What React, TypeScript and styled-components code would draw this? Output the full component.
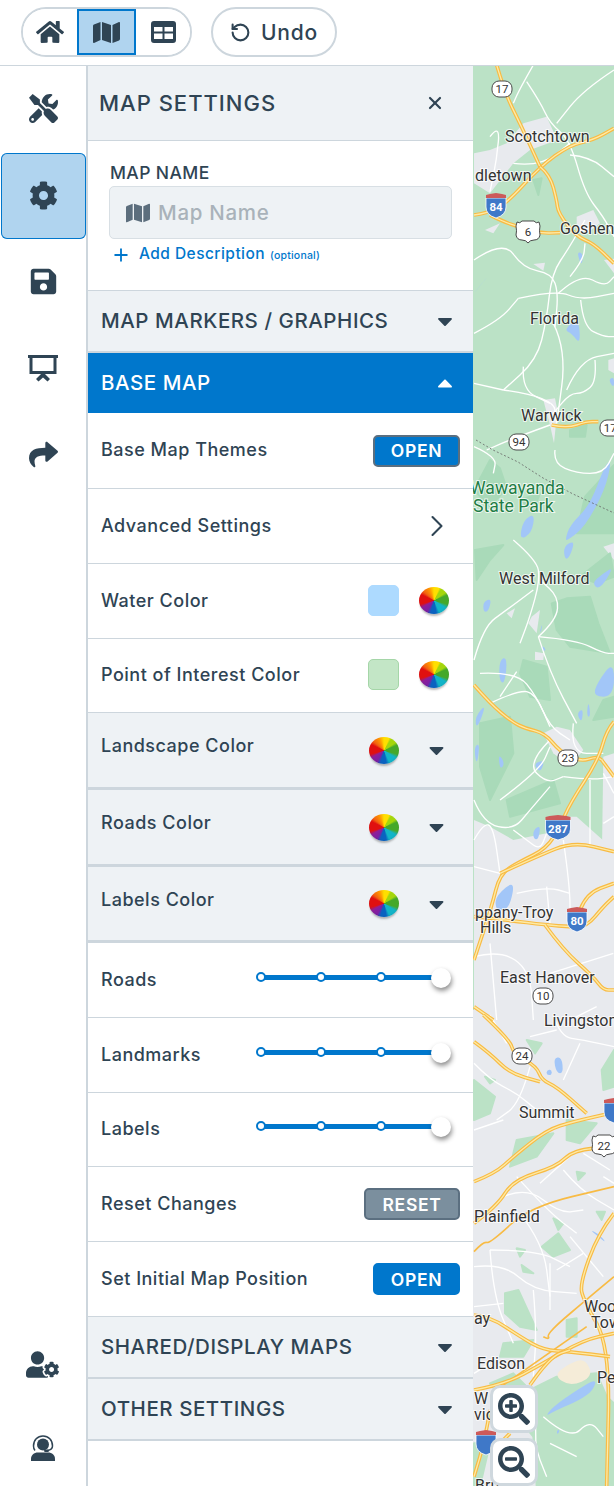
import React from "react";
import styled, { createGlobalStyle } from "styled-components";
import { FaHome, FaMap, FaTools, FaCog, FaSave, FaShare, FaUserCog, FaSearchPlus, FaSearchMinus, FaCaretDown, FaCaretUp } from "react-icons/fa";
import { RotateCcw, Plus, X, ChevronRight } from "lucide-react";

const ink = "#2f4454";
const line = "#cdd6dd";
const blue = "#0077cc";
const soft = "#eef2f5";
const pale = "#b0d4ef";

const Global = createGlobalStyle`
  html, body { margin: 0; padding: 0; background: #fff; }
  * { box-sizing: border-box; }
  body { font-family: Inter, "Open Sans", sans-serif; color: ${ink}; }
`;
const Page = styled.div`
  width: 614px; height: 1486px; overflow: hidden; display: flex; flex-direction: column;
`;
const TopBar = styled.header`
  height: 66px; flex: none; border-bottom: 1px solid ${line}; padding: 7px 0 0 21px; display: flex; gap: 19px; align-items: flex-start;
`;
const Pill = styled.div`
  height: 50px; display: flex; border: 2px solid ${line}; border-radius: 25px; overflow: hidden; background: #fff;
`;
const PillButton = styled.div<{ $w: number; $on?: boolean }>`
  width: ${p => p.$w}px; display: flex; align-items: center; justify-content: center; font-size: 26px;
  background: ${p => (p.$on ? pale : "#fff")};
  box-shadow: ${p => (p.$on ? `inset 0 0 0 2px ${blue}` : "none")};
`;
const UndoPill = styled(Pill)`
  width: 126px; align-items: center; justify-content: center; gap: 10px; font-size: 21px; font-weight: 500; letter-spacing: .85px;
`;
const Body = styled.div`
  flex: 1; display: flex; min-height: 0;
`;
const Rail = styled.nav`
  width: 88px; flex: none; border-right: 2px solid ${line}; display: flex; flex-direction: column; overflow: hidden;
`;
const RailItem = styled.div<{ $on?: boolean }>`
  height: 86.5px; flex: none; display: flex; align-items: center; justify-content: center; font-size: 29px;
  margin-left: 1px; padding: 0 1px 1px 0; border-radius: 6px;
  background: ${p => (p.$on ? pale : "transparent")};
  box-shadow: ${p => (p.$on ? `inset 0 0 0 1px ${blue}` : "none")};
`;
const RailFoot = styled.div`
  margin-top: auto; margin-bottom: -3px;
`;
const FootItem = styled.div`
  height: 83px; display: flex; align-items: center; justify-content: center; padding-right: 1px;
`;
const Panel = styled.section`
  width: 385px; flex: none; display: flex; flex-direction: column;
`;
const TitleBar = styled.div`
  height: 75px; flex: none; background: ${soft}; border-bottom: 1px solid ${line}; display: flex; align-items: center; justify-content: space-between; padding: 0 28px 0 11px;
  h1 { margin: 0; font-size: 22px; font-weight: 500; letter-spacing: 1px; }
`;
const NameBlock = styled.div`
  height: 150px; flex: none; padding: 21px 21px 0 21px; border-bottom: 1px solid ${line};
`;
const NameLabel = styled.div`
  font-size: 17.5px; font-weight: 500; line-height: 21px; letter-spacing: .4px; margin-left: 1px;
`;
const NameInput = styled.div`
  height: 53px; margin-top: 3px; background: ${soft}; border: 1px solid #d8dfe4; border-radius: 5px; padding-left: 16px; display: flex; align-items: center; gap: 8px;
  color: #a9b2ba; font-size: 20.5px; font-weight: 500; letter-spacing: .7px; svg { color: #5c6e7d; font-size: 24px; }
`;
const AddLine = styled.div`
  display: flex; align-items: baseline; margin: 5px 0 0 2px; color: ${blue}; font-size: 15.5px; font-weight: 500; letter-spacing: .45px; line-height: 20px;
  svg { align-self: center; margin-right: 8px; }
  small { font-size: 10.5px; margin-left: 5px; letter-spacing: .2px; }
`;
const Section = styled.div<{ $on?: boolean; $h?: number }>`
  height: ${p => p.$h ?? 62}px; flex: none; padding: 0 16px 1px 13px; display: flex; align-items: center; justify-content: space-between;
  background: ${p => (p.$on ? blue : soft)}; color: ${p => (p.$on ? "#fff" : ink)};
  font-size: 20.5px; font-weight: 500; letter-spacing: .55px;
  border-bottom: ${p => (p.$on ? "none" : `2px solid ${line}`)};
  svg { font-size: 24px; }
`;
const Row = styled.div<{ $h?: number; $gray?: boolean; $right?: number }>`
  height: ${p => p.$h ?? 75}px; flex: none; display: flex; align-items: center; justify-content: space-between;
  padding: 0 0 0 13px;
  padding-right: ${p => p.$right ?? 13}px;
  background: ${p => (p.$gray ? soft : "#fff")};
  border-bottom: ${p => (p.$gray ? `3px solid ${line}` : `1px solid ${line}`)};
`;
const Label = styled.span<{ $lift?: number }>`
  font-size: 18px; font-weight: 500; letter-spacing: .5px; margin-bottom: ${p => p.$lift ?? 2}px;
`;
const Btn = styled.div<{ $kind?: string; $w?: number }>`
  width: ${p => p.$w ?? 87}px; height: 32px; border-radius: 5px; display: flex; align-items: center; justify-content: center;
  color: #fff; font-size: 17.5px; font-weight: 600; letter-spacing: .7px;
  background: ${p => (p.$kind === "reset" ? "#7b8f9e" : blue)};
  border: 2px solid ${p => (p.$kind === "blue" ? blue : "#5b6f80")};
`;
const Tools = styled.div<{ $gap: number; $up?: number }>`
  display: flex; align-items: center; gap: ${p => p.$gap}px; margin-bottom: ${p => p.$up ?? 0}px;
`;
const Swatch = styled.div<{ $c: string; $b?: string }>`
  width: 31px; height: 31px; border-radius: 5px; background: ${p => p.$c}; border: 1px solid ${p => p.$b ?? p.$c};
`;
const Wheel = styled.div`
  width: 30px; height: 27px; border-radius: 50%;
  background:
    radial-gradient(circle at 50% 42%, transparent 62%, rgba(0,0,0,.16) 100%),
    conic-gradient(#ffdf00 0deg, #ffdf00 22deg, #a4d60c 32deg, #a4d60c 55deg, #45a82a 68deg, #45a82a 105deg, #12b4c8 122deg, #12b4c8 155deg, #0a62c0 170deg, #0a62c0 195deg, #7a20a4 212deg, #8f1e98 240deg, #e01010 255deg, #e01010 295deg, #f26010 310deg, #ff9a00 340deg, #ffdf00 360deg);
  box-shadow: 0 3px 2px -1px rgba(60,60,60,.35);
`;
const Caret = styled.span`
  display: flex; width: 15px; justify-content: center; font-size: 24px;
`;
const Slider = styled.div`
  width: 180px; height: 5px; position: relative; background: ${blue}; margin: 0 32px 6px 0; border-radius: 2px;
`;
const Stop = styled.i<{ $at: number }>`
  position: absolute; left: ${p => p.$at}px; top: -3px; width: 10px; height: 10px; margin-left: -5px; border-radius: 50%; background: #fff; border: 2px solid ${blue};
`;
const Thumb = styled.i`
  position: absolute; left: 170px; top: -7px; width: 20px; height: 20px; border-radius: 50%; background: #fff; box-shadow: 1px 3px 5px rgba(0,0,0,.45);
`;
const MapPane = styled.div`
  flex: 1; position: relative; overflow: hidden; background: #bbe2c6;
  svg.map { display: block; }
`;
const ZoomBtn = styled.div<{ $top: number }>`
  position: absolute; left: 17px; top: ${p => p.$top}px; width: 48px; height: 48px; background: #fff; border: 3px solid #cfd8de; border-radius: 10px; display: flex; align-items: center; justify-content: center; font-size: 32px; color: ${ink};
`;

type Tile = { y: number; patch: string; grey?: string[]; dark?: string[]; tan?: string[]; water?: string[]; white?: string[]; gold?: string[] };
const tiles: Tile[] = [
  { y: 60, patch: "#a9dab9",
    grey: ["12,280 60,270 110,250 160,190 230,170 262,240 180,270 130,310 60,400 12,370", "320,470 370,450 390,490 350,520 320,510", "190,612 225,608 220,632", "220,1020 255,1015 262,1050 252,1150 240,1095", "402,600 432,596 432,640", "415,900 432,895 432,940 415,930", "45,510 90,490 70,520"],
    dark: ["60,1200 90,1225 110,1285 60,1340 12,1290", "345,1310 432,1215 432,1420 320,1420", "300,1110 350,1095 345,1130 300,1130", "190,360 215,355 205,405", "150,1320 210,1300 190,1350"],
    water: ["405,1215 425,1200 405,1290 345,1400 295,1440 285,1440 300,1395 360,1335", "282,810 325,770 332,855 305,820", "160,1380 195,1360 185,1420 148,1440", "415,960 432,950 432,985", "320,575 340,580 335,620", "12,700 60,640 20,690"],
    white: ["190,15 150,85 130,130", "170,65 210,125 240,190 300,240 345,400 400,470 432,530", "432,30 340,90 260,190", "60,230 90,190 80,300 60,395", "130,310 210,320 300,250", "300,285 360,290 432,350", "12,600 100,540 160,625 245,640 265,700 255,800", "345,480 300,560 245,640 230,780 200,900 100,990", "145,715 260,690 330,720 432,700", "12,820 90,780 145,715", "265,700 330,640 405,680 432,650", "300,650 340,600 345,550", "250,790 290,870 260,1090", "332,720 340,800 400,830 432,830", "100,990 250,1010 260,1090", "12,970 100,990", "290,990 330,900 432,880", "375,900 380,965 340,1000 300,1000 250,1060", "160,920 155,990 240,1030", "240,1095 130,1135 50,1170", "255,1170 250,1210 320,1240 400,1240 432,1180", "12,1160 80,1190 70,1240"],
    gold: ["80,15 105,100 150,190 210,320", "12,465 50,460 110,430 210,320 300,255 370,240 432,205", "210,320 240,345 260,420 265,460 320,530 370,550 432,610", "60,465 100,485 145,500 210,520 270,518", "245,1095 290,1105 350,1085 385,1085"] },
  { y: 540, patch: "#a9dab9",
    grey: ["220,580 260,560 300,570 340,630 300,680 250,640", "110,220 135,205 125,235", "185,230 210,210 200,280 175,250", "400,650 432,640 432,1000 395,1000", "12,840 60,860 130,900 230,880 300,830 320,830 432,930 432,1440 12,1440", "400,20 432,10 432,60", "195,335 222,340 220,360 195,360"],
    dark: ["15,30 100,15 60,60 20,120", "245,190 290,175 360,170 385,250 420,340 300,320 260,270", "160,360 230,380 240,480 180,470 150,400", "30,550 120,530 130,640 60,780 30,680", "110,780 250,720 270,790 120,830", "330,110 420,40 432,110 380,130", "400,480 432,470 432,530 370,540"],
    water: ["280,20 315,0 300,50 285,60", "40,185 65,175 55,215 40,215", "365,130 400,100 432,80 390,150", "88,360 112,350 105,430 88,425", "380,430 432,360 432,470 370,470", "15,530 50,490 20,570", "12,620 30,610 20,680", "85,640 105,670 90,690", "190,670 225,660 210,700", "320,520 340,505 335,550", "80,1065 135,1020 120,1100 90,1115 75,1100", "190,870 212,855 205,900 190,895", "355,480 362,530 350,530", "215,315 230,330 215,335", "210,270 218,250 212,280"],
    white: ["130,0 200,60 210,120 180,230 150,310", "12,360 40,260 110,210 190,150", "205,290 260,240 265,170 210,120", "205,290 320,300 400,340 432,340", "205,290 240,400 320,550", "30,400 140,395 200,470 240,560", "60,490 145,450 195,460 240,560 300,600", "240,600 170,670 230,730 280,710", "140,395 90,470", "90,780 210,690 240,620", "12,780 40,850 130,870 180,810 240,740", "12,900 40,850 70,860 90,1000", "130,870 170,900 210,930 230,880", "280,900 300,1040 300,1150", "140,1060 230,1040 300,1060", "230,1040 240,1150", "12,1250 90,1230 180,1290 190,1440", "60,1210 80,1440", "240,1300 430,1240", "400,700 432,760", "400,850 432,830", "360,720 360,920", "12,980 90,1000", "380,1400 300,1440", "310,550 300,640 400,640", "280,710 360,720 432,710"],
    gold: ["12,435 60,490 125,545 165,565 225,580 270,635 330,665 380,650 395,660", "432,545 410,570 385,660 300,790 270,860 230,925 150,965 90,1000 65,1100 12,1260", "90,1000 200,950 310,905 432,935", "12,1130 110,1140 230,1155 300,1160 350,1160 400,1100 432,1070", "330,1110 350,1060 432,1030", "225,1155 280,1230 370,1310 400,1350 432,1350", "395,660 432,710", "12,1400 70,1440"] },
  { y: 1010, patch: "#bbe2c6",
    grey: ["0,0 432,0 432,1428 0,1428"],
    dark: ["12,210 75,260 60,310 12,330", "290,330 380,340 330,400 290,390", "140,390 250,370 200,440 120,470", "395,180 432,120 432,230 400,240", "45,200 75,210 60,220", "215,710 265,670 300,720 250,740", "140,715 165,720 150,740", "250,625 280,640 265,660", "105,850 145,840 200,960 150,950 105,910", "155,765 190,790 160,785", "290,930 320,925 320,980 290,980", "380,605 405,605 395,630", "320,485 345,490 325,510", "170,90 215,100 195,130", "100,1000 190,990 160,1040 90,1040", "180,1140 260,1100 380,1090 410,1160 432,1180 432,1428 200,1428 190,1280 60,1120 130,1090", "12,1300 60,1300 30,1428 12,1428"],
    tan: ["250,1095 300,1060 345,1045 370,1100 300,1130"],
    water: ["250,145 275,140 280,190 260,190", "230,180 245,178 245,195 230,195", "380,1105 320,1140 250,1190 225,1220 260,1200 330,1170 370,1140", "260,1260 270,1260 262,1275", "360,660 385,670 410,700 385,680"],
    white: ["12,160 60,210 140,250 200,300", "250,15 270,80 340,90 432,110", "60,15 110,100", "180,80 260,60", "280,210 330,100", "180,170 150,280 80,330", "12,360 100,330", "140,500 230,600 320,670", "100,560 170,530 270,610 340,600", "210,520 310,430", "60,720 200,720 300,770", "60,720 70,860 130,1000", "150,610 220,700 240,860", "12,770 100,760 190,840 320,850", "240,760 240,900", "190,840 200,960 190,1100", "300,680 400,800", "12,890 100,880", "280,480 330,540 432,600", "260,780 340,730", "60,1060 12,1090", "220,1220 300,1290 360,1230 400,1280", "240,1300 320,1340", "200,1220 190,1300 230,1400", "400,500 432,520", "340,430 420,480"],
    gold: ["40,15 120,90 130,130 200,170 215,210 260,230 350,310", "12,95 60,130 120,190 210,215", "12,515 75,490 130,440 230,360 310,335 420,310", "12,640 80,590 130,510 260,470 310,420 432,410", "432,610 385,670 330,820 340,870 420,1010 410,1428", "12,915 60,920 150,980 220,1020 300,1025 420,1040", "12,1140 100,1125 220,1060 340,990 432,970", "180,1125 240,1040 300,1020", "60,1200 45,1290 12,1400", "100,1290 120,1270"] },
];
const thinGold = [
  "12,725 40,695 60,700 180,590 432,530",
  "220,980 240,990 230,970 360,860 432,800",
  "100,1125 250,1020 350,950",
];

const smooth = (s: string, closed = false) => {
  const p = s.split(" ").map(q => q.split(",").map(Number));
  if (closed) {
    const mid = (a: number[], b: number[]) => `${(a[0] + b[0]) / 2} ${(a[1] + b[1]) / 2}`;
    let d = `M${mid(p[p.length - 1], p[0])}`;
    p.forEach((q, i) => { d += `Q${q[0]} ${q[1]} ${mid(q, p[(i + 1) % p.length])}`; });
    return d + "Z";
  }
  let d = `M${p[0][0]} ${p[0][1]}`;
  for (let i = 1; i < p.length - 1; i++) {
    d += `Q${p[i][0]} ${p[i][1]} ${(p[i][0] + p[i + 1][0]) / 2} ${(p[i][1] + p[i + 1][1]) / 2}`;
  }
  return d + `L${p[p.length - 1][0]} ${p[p.length - 1][1]}`;
};

const Gold = ({ pts }: { pts: string }) => (
  <>
    <path d={smooth(pts)} fill="none" stroke="#f8bb44" strokeWidth={11} strokeLinejoin="round" />
    <path d={smooth(pts)} fill="none" stroke="#fdeaa6" strokeWidth={4} strokeLinejoin="round" />
  </>
);

const RouteBadge = ({ x, y, t, w = 20 }: { x: number; y: number; t: string; w?: number }) => (
  <g>
    <rect x={x - w / 2} y={y - 8} width={w} height={16} rx={7} fill="#fff" stroke="#4a4a4a" strokeWidth={1} />
    <text x={x} y={y + 4} textAnchor="middle" fontSize={11.5} fill="#333" fontFamily="Roboto, sans-serif">{t}</text>
  </g>
);
const UsBadge = ({ x, y, t }: { x: number; y: number; t: string }) => (
  <g>
    <path d={`M${x - 11} ${y - 9}q3 2 5 -1h12q2 3 5 1l1 4q-1 5 0 9q-1 5 -6 5q-4 0 -6 3q-2 -3 -6 -3q-5 0 -6 -5q1 -4 0 -9z`} fill="#fff" stroke="#4a4a4a" strokeWidth={1} />
    <text x={x} y={y + 5} textAnchor="middle" fontSize={11.5} fill="#333" fontFamily="Roboto, sans-serif">{t}</text>
  </g>
);
const Interstate = ({ x, y, t, w = 20 }: { x: number; y: number; t: string; w?: number }) => (
  <g>
    <path d={`M${x - w / 2} ${y - 9}h${w}v9q0 8 -${w / 2} 11q-${w / 2} -3 -${w / 2} -11z`} fill="#3f78c8" stroke="#fff" strokeWidth={.8} />
    <path d={`M${x - w / 2} ${y - 9}v-3l4 -1 ${w / 2 - 4} -1 ${w / 2 - 4} 1 4 1v3z`} fill="#cc5a5a" />
    {t ? <text x={x} y={y + 4} textAnchor="middle" fontSize={11.5} fontWeight={700} fill="#fff" fontFamily="Roboto, sans-serif">{t}</text> : null}
  </g>
);
const Place = ({ x, y, t, c = "#333" }: { x: number; y: number; t: string; c?: string }) => (
  <text x={x} y={y} fontSize={c === "#333" ? 16 : 17.6} fill={c} stroke="#fff" strokeOpacity={.75} strokeWidth={2} paintOrder="stroke" fontFamily="Roboto, sans-serif">{t}</text>
);

const layer = (key: "grey" | "dark" | "tan" | "water" | "white" | "gold", fn: (p: string, i: number, t: Tile) => React.ReactNode) =>
  tiles.map(t => (
    <g key={`${key}${t.y}`} transform={`translate(-3 ${t.y - 66}) scale(${1 / 3})`}>
      {(t[key] ?? []).map((p, i) => fn(p, i, t))}
    </g>
  ));

const MapArt = () => (
  <svg className="map" width="141" height="1420" viewBox="0 0 141 1420">
    <rect width="141" height="1420" fill="#bbe2c6" />
    {layer("grey", (p, i) => <polygon key={i} points={p} fill="#e8eaee" />)}
    {layer("dark", (p, i, t) => <polygon key={i} points={p} fill={t.patch} stroke={t.patch} strokeWidth={6} strokeLinejoin="round" />)}
    {layer("tan", (p, i) => <path key={i} d={smooth(p, true)} fill="#f5ecd8" />)}
    {layer("water", (p, i) => <path key={i} d={smooth(p, true)} fill="#a2c6f8" />)}
    {layer("white", (p, i) => <path key={i} d={smooth(p)} fill="none" stroke="#fff" strokeWidth={4} strokeLinejoin="round" />)}
    <g transform={`translate(-3 ${1010 - 66}) scale(${1 / 3})`}>
      {thinGold.map((p, i) => <path key={i} d={smooth(p)} fill="none" stroke="#f8bb44" strokeWidth={5} />)}
    </g>
    <polyline points="3,374 20,384 45,396 70,412 100,428 141,447" fill="none" stroke="#666" strokeWidth={.8} strokeDasharray="2 2" />
    {layer("gold", (p, i) => <Gold key={i} pts={p} />)}
    <RouteBadge x={29} y={23} t="17" />
    <Interstate x={23} y={141} t="84" />
    <UsBadge x={55} y={165} t="6" />
    <RouteBadge x={46} y={376} t="94" />
    <RouteBadge x={141} y={362} t="17A" w={28} />
    <RouteBadge x={95} y={692} t="23" />
    <Interstate x={85} y={763} t="287" w={25} />
    <Interstate x={104} y={855} t="80" />
    <RouteBadge x={70} y={930} t="10" />
    <RouteBadge x={49} y={990} t="24" />
    <Interstate x={141} y={1046} t="" />
    <UsBadge x={131} y={1079} t="22" />
    <Interstate x={13} y={1378} t="" />
    <Place x={32} y={76} t="Scotchtown" />
    <Place x={2} y={115} t="dletown" />
    <Place x={87} y={168} t="Goshen" />
    <Place x={57} y={258} t="Florida" />
    <Place x={48} y={355} t="Warwick" />
    <Place x={-3} y={428} t="Wawayanda" c="#1e7d45" />
    <Place x={0} y={446} t="State Park" c="#1e7d45" />
    <Place x={26} y={518} t="West Milford" />
    <Place x={2} y={852} t="ppany-Troy" />
    <Place x={7} y={867} t="Hills" />
    <Place x={27} y={917} t="East Hanover" />
    <Place x={71} y={960} t="Livingston" />
    <Place x={46} y={1052} t="Summit" />
    <Place x={1} y={1156} t="Plainfield" />
    <Place x={111} y={1246} t="Woo" />
    <Place x={118} y={1262} t="Tow" />
    <Place x={1} y={1258} t="ay" />
    <Place x={4} y={1303} t="Edison" />
    <Place x={124} y={1317} t="Pe" />
    <Place x={1} y={1338} t="W" />
    <Place x={1} y={1354} t="vic" />
    <Place x={2} y={1425} t="Bru" />
  </svg>
);

const TableIcon = () => (
  <svg width="25" height="22" viewBox="0 0 25 22"><path fillRule="evenodd" fill={ink} d="M3 0h19a3 3 0 0 1 3 3v16a3 3 0 0 1-3 3H3a3 3 0 0 1-3-3V3a3 3 0 0 1 3-3zM3 6v4.500h8.500V6zM13.500 6v4.500H22V6zM3 12.500V18h8.500v-5.500zM13.500 12.500V18H22v-5.500z" /></svg>
);
const ScreenIcon = () => (
  <svg width="30" height="27" viewBox="0 0 30 27" fill={ink}>
    <path fillRule="evenodd" d="M0 0h30v3h-1.500V19H1.500V3H0zM4.500 3V16h21V3z" />
    <path d="M15 17l7 7-2.500 2.500-4.500-4-4.500 4L8 24z" />
  </svg>
);
const AgentIcon = () => (
  <svg width="24" height="26" viewBox="0 0 24 26" fill={ink}>
    <circle cx="12" cy="9.500" r="6" />
    <path d="M0 26v-2c0-4 3-6.500 7-6.500h10c4 0 7 2.500 7 6.500v2z" />
    <path d="M2.500 11C2.500 5 6.500 1 12 1s9.500 4 9.500 10c0 2.500-2 4-5 4.500" fill="none" stroke={ink} strokeWidth="1.500" />
    <path d="M4 15.500C2.500 14 2.500 12 2.500 11" fill="none" stroke={ink} strokeWidth="1.500" />
    <rect x="13" y="14.500" width="5" height="2.500" rx="1.200" />
  </svg>
);

const Sl = () => (
  <Slider>
    <Stop $at={0} /><Stop $at={60} /><Stop $at={120} /><Thumb />
  </Slider>
);

export default function App() {
  return (
    <Page>
      <Global />
      <TopBar>
        <Pill>
          <PillButton $w={54}><FaHome size={28} /></PillButton>
          <PillButton $w={59} $on><FaMap size={27} /></PillButton>
          <PillButton $w={54}><TableIcon /></PillButton>
        </Pill>
        <UndoPill><RotateCcw size={21} strokeWidth={2.4} />Undo</UndoPill>
      </TopBar>
      <Body>
        <Rail>
          <RailItem><FaTools /></RailItem>
          <RailItem $on><FaCog /></RailItem>
          <RailItem><FaSave /></RailItem>
          <RailItem><ScreenIcon /></RailItem>
          <RailItem><FaShare /></RailItem>
          <RailFoot>
            <FootItem><FaUserCog size={33} /></FootItem>
            <FootItem><AgentIcon /></FootItem>
          </RailFoot>
        </Rail>
        <Panel>
          <TitleBar><h1>MAP SETTINGS</h1><X size={20} strokeWidth={2.6} /></TitleBar>
          <NameBlock>
            <NameLabel>MAP NAME</NameLabel>
            <NameInput><FaMap />Map Name</NameInput>
            <AddLine><Plus size={20} strokeWidth={2.2} />Add Description<small>(optional)</small></AddLine>
          </NameBlock>
          <Section>MAP MARKERS / GRAPHICS<FaCaretDown /></Section>
          <Section $on $h={60}>BASE MAP<FaCaretUp /></Section>
          <Row $h={76}><Label>Base Map Themes</Label><Btn>OPEN</Btn></Row>
          <Row $right={18}><Label>Advanced Settings</Label><Tools $gap={0}><ChevronRight size={36} strokeWidth={1.4} /></Tools></Row>
          <Row $right={24}><Label>Water Color</Label><Tools $gap={20} $up={2}><Swatch $c="#addaff" /><Wheel /></Tools></Row>
          <Row $h={74} $right={24}><Label>Point of Interest Color</Label><Tools $gap={20} $up={2}><Swatch $c="#c3e6c6" $b="#a5d6a8" /><Wheel /></Tools></Row>
          <Row $gray $h={77} $right={29}><Label $lift={9}>Landscape Color</Label><Tools $gap={30}><Wheel /><Caret><FaCaretDown /></Caret></Tools></Row>
          <Row $gray $h={77} $right={29}><Label $lift={9}>Roads Color</Label><Tools $gap={30}><Wheel /><Caret><FaCaretDown /></Caret></Tools></Row>
          <Row $gray $h={76} $right={29}><Label $lift={9}>Labels Color</Label><Tools $gap={30}><Wheel /><Caret><FaCaretDown /></Caret></Tools></Row>
          <Row $right={0}><Label>Roads</Label><Sl /></Row>
          <Row $right={0}><Label>Landmarks</Label><Sl /></Row>
          <Row $h={74} $right={0}><Label>Labels</Label><Sl /></Row>
          <Row><Label>Reset Changes</Label><Btn $kind="reset" $w={96}>RESET</Btn></Row>
          <Row><Label>Set Initial Map Position</Label><Btn $kind="blue">OPEN</Btn></Row>
          <Section>SHARED/DISPLAY MAPS<FaCaretDown /></Section>
          <Section>OTHER SETTINGS<FaCaretDown /></Section>
        </Panel>
        <MapPane>
          <MapArt />
          <ZoomBtn $top={1319}><FaSearchPlus /></ZoomBtn>
          <ZoomBtn $top={1372}><FaSearchMinus /></ZoomBtn>
        </MapPane>
      </Body>
    </Page>
  );
}
